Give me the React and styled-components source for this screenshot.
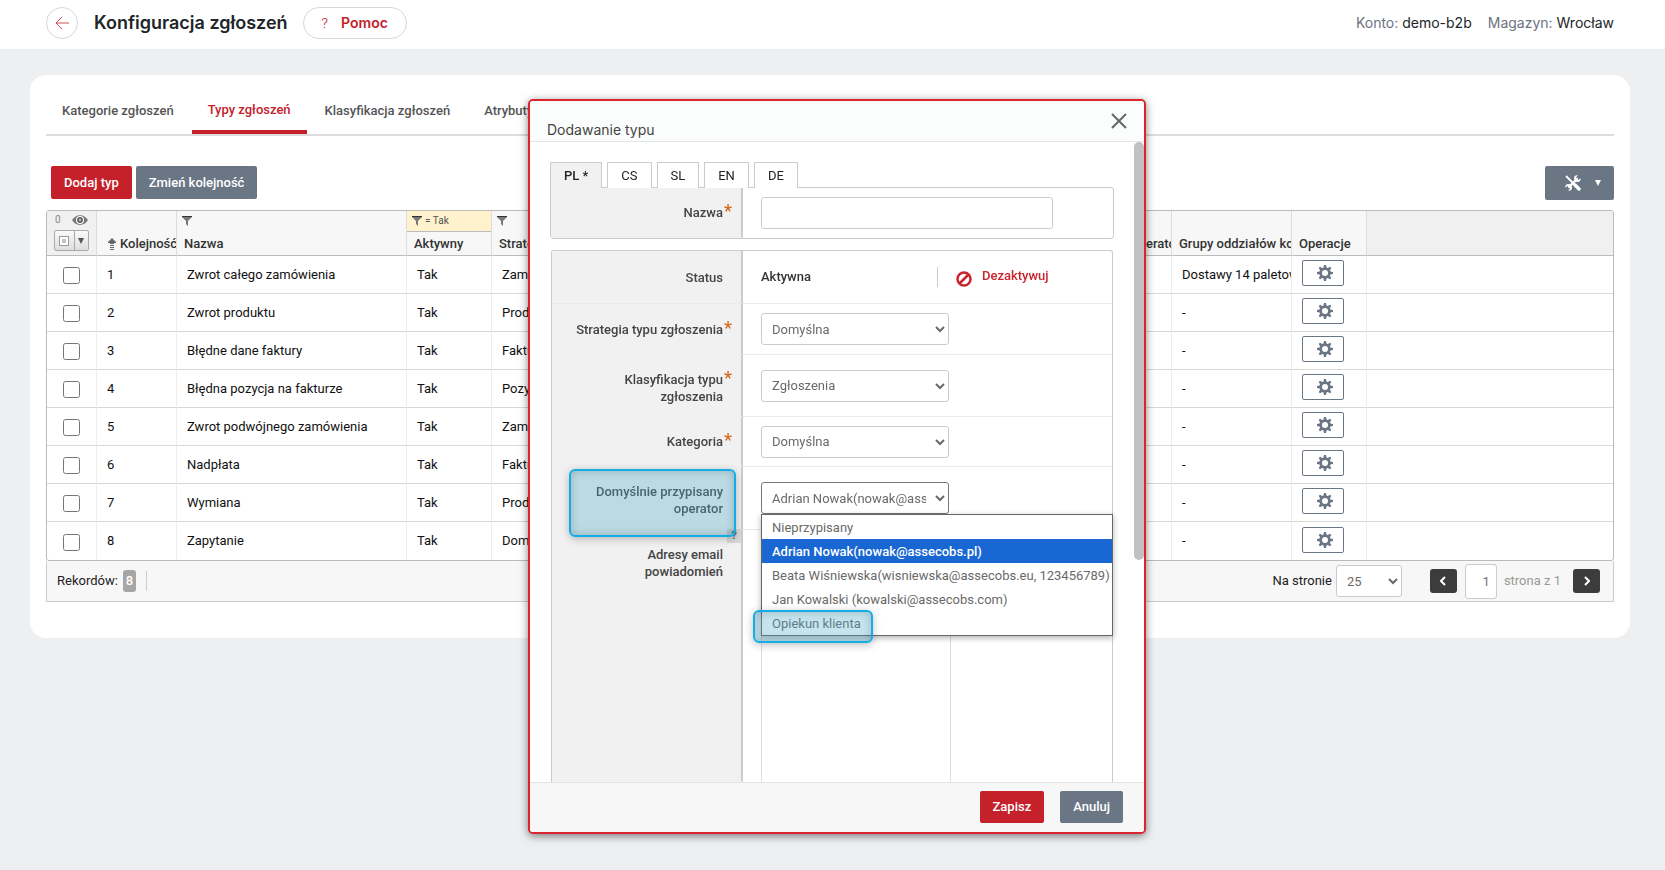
import React, { useState } from 'react';
import styled, { createGlobalStyle, css } from 'styled-components';

const GlobalStyle = createGlobalStyle`
  * {
    box-sizing: border-box;
  }

  body {
    margin: 0;
    background: #eeeff1;
    color: #212529;
    font-family: Roboto, 'Liberation Sans', sans-serif;
    font-size: 13px;
    line-height: 16px;
  }

  button,
  input,
  select,
  textarea {
    font: inherit;
  }

  svg {
    flex: none;
  }
`;

const ticketTypes = [
  { id: 1, name: 'Zwrot całego zamówienia', strategy: 'Zamówienie', groups: 'Dostawy 14 paletowe' },
  { id: 2, name: 'Zwrot produktu', strategy: 'Produkt', groups: '-' },
  { id: 3, name: 'Błędne dane faktury', strategy: 'Faktura', groups: '-' },
  { id: 4, name: 'Błędna pozycja na fakturze', strategy: 'Pozycja faktury', groups: '-' },
  { id: 5, name: 'Zwrot podwójnego zamówienia', strategy: 'Zamówienie', groups: '-' },
  { id: 6, name: 'Nadpłata', strategy: 'Faktura', groups: '-' },
  { id: 7, name: 'Wymiana', strategy: 'Produkt', groups: '-' },
  { id: 8, name: 'Zapytanie', strategy: 'Domyślna', groups: '-' },
];

const operators = [
  'Nieprzypisany',
  'Adrian Nowak(nowak@assecobs.pl)',
  'Beata Wiśniewska(wisniewska@assecobs.eu, 123456789)',
  'Jan Kowalski (kowalski@assecobs.com)',
  'Opiekun klienta',
];

const pageTabs = ['Kategorie zgłoszeń', 'Typy zgłoszeń', 'Klasyfikacja zgłoszeń', 'Atrybuty zgłoszeń'];
const languages = ['PL *', 'CS', 'SL', 'EN', 'DE'];

/* ---------- icons ---------- */

const ArrowLeft = () => (
  <svg width="14" height="14" viewBox="0 0 14 14" fill="none" stroke="#c4212b" strokeWidth=".8" aria-hidden="true">
    <path d="M14 7H1M7 1 1 7l6 6" />
  </svg>
);

const Funnel = () => (
  <svg width="10" height="10" viewBox="0 0 10 10" aria-hidden="true">
    <path d="M0 0h10v1L6 5v5L4 8V5L0 1z" fill="#777" />
    <path d="M0 0h10v1H0z" fill="#333" />
  </svg>
);

const Eye = () => (
  <svg width="16" height="10" viewBox="0 0 16 10" aria-hidden="true">
    <path d="M0 5C4-1.500 12-1.500 16 5 12 11.500 4 11.500 0 5z" fill="#777" />
    <circle cx="8" cy="5" r="4" fill="#fff" />
    <circle cx="8" cy="5" r="3" fill="#666" />
    <circle cx="8" cy="5" r="1" fill="#ddd" />
  </svg>
);

const SortUp = () => (
  <svg width="8" height="12" viewBox="0 0 8 12" fill="#666" aria-hidden="true">
    <path d="M4 0 8 4v1H6v1H2V5H0V4zM2 7h4v1H2zM2 9h4v1H2zM2 11h4v1H2z" />
  </svg>
);

const Gear = () => (
  <svg width="16" height="16" viewBox="0 0 16 16" aria-hidden="true">
    <g fill="#6b7685">
      {[0, 45, 90, 135].map(angle => (
        <path key={angle} d="M7 0h2l.6 3v10L9 16H7l-.6-3V3z" transform={`rotate(${angle} 8 8)`} />
      ))}
      <circle cx="8" cy="8" r="5.700" />
    </g>
    <circle cx="8" cy="8" r="3" fill="#fff" />
  </svg>
);

const Tools = () => (
  <svg width="16" height="16" viewBox="0 0 16 16" aria-hidden="true">
    <g fill="none" stroke="#fff" strokeLinecap="round">
      <path d="M1.500 1.500 9 9" strokeWidth="1.800" />
      <path d="m10 10 4 4" strokeWidth="3.400" />
      <path d="M4 12 12 4" strokeWidth="2.400" />
    </g>
    <path d="M15.700 3.200 13.500 5 11.300 4.700 11 2.500 12.800.4C10 0 8.500 2 9.100 4.300l2.600 2.600C14 7.500 16 6 15.700 3.200z" fill="#fff" />
    <path d="M.3 12.800 2.500 11l2.200.3.300 2.200L3.200 15.600C6 16 7.500 14 6.900 11.700L4.300 9.100C2 8.500 0 10 .3 12.800z" fill="#fff" />
  </svg>
);

const Ban = () => (
  <svg width="16" height="16" viewBox="0 0 16 16" fill="none" stroke="#c9252f" strokeWidth="2.500" aria-hidden="true">
    <circle cx="8" cy="8" r="6.500" />
    <path d="M3.500 12.500l9-9" />
  </svg>
);

const Cross = () => (
  <svg width="16" height="16" viewBox="0 0 16 16" fill="none" stroke="#666" strokeWidth="2" aria-hidden="true">
    <path d="M1 1l14 14M15 1 1 15" />
  </svg>
);

const Chevron = ({ right }) => (
  <svg width="6" height="10" viewBox="0 0 6 10" fill="none" stroke="#fff" strokeWidth="2" aria-hidden="true">
    <path d={right ? 'M1 1l4 4-4 4' : 'M5 1 1 5l4 4'} />
  </svg>
);

const CaretDown = ({ color = '#fff' }) => (
  <svg width="6" height="6" viewBox="0 0 6 6" fill={color} aria-hidden="true">
    <path d="M0 0h6L3 6z" />
  </svg>
);

/* ---------- page header ---------- */

const Header = styled.header`
  display: flex;
  align-items: center;
  height: 49px;
  padding: 0 51px 3px 46px;
  background: #fff;
  font-family: Inter, Roboto, sans-serif;
`;

const BackButton = styled.button`
  display: flex;
  align-items: center;
  justify-content: center;
  width: 32px;
  height: 32px;
  padding: 0;
  border: 1px solid #d5d7dd;
  border-radius: 50%;
  background: #fff;
`;

const PageTitle = styled.h1`
  margin: 0 15px 0 16px;
  font-size: 18px;
  font-weight: 600;
  line-height: 24px;
`;

const HelpButton = styled.button`
  display: flex;
  align-items: center;
  gap: 13px;
  height: 32px;
  padding: 0 18px;
  border: 1px solid #d5d7dd;
  border-radius: 16px;
  background: #fff;
  color: #c4212b;
  font-size: 14px;
  font-weight: 600;

  span {
    font-size: 13px;
    font-weight: 300;
  }
`;

const Account = styled.div`
  display: flex;
  gap: 16px;
  margin-left: auto;
  color: #6b7280;
  font-size: 14px;

  b {
    color: #212529;
    font-weight: 400;
  }
`;

/* ---------- card ---------- */

const Card = styled.main`
  margin: 26px 35px 26px 30px;
  padding: 16px 16px 36px;
  border-radius: 16px;
  background: #fff;
`;

const Tabs = styled.nav`
  display: flex;
  gap: 2px;
  border-bottom: 2px solid #ddd;
`;

const Tab = styled.a`
  height: 43px;
  padding: 12px 16px 0;
  color: #555;
  font-weight: 500;
  text-decoration: none;

  ${({ $active }) =>
    $active &&
    css`
      padding-top: 11px;
      border-bottom: 4px solid #c4212b;
      color: #c4212b;
    `}
`;

const Toolbar = styled.div`
  display: flex;
  gap: 4px;
  align-items: flex-start;
  padding: 30px 0 10px 5px;
`;

const Button = styled.button`
  display: flex;
  align-items: center;
  height: ${({ $small }) => ($small ? 32 : 33)}px;
  padding: 0 13px;
  border: 0;
  border-radius: 2px;
  background: ${({ $primary }) => ($primary ? '#c4212b' : '#6b7685')};
  color: #fff;
  font-weight: 500;
`;

const ToolsButton = styled(Button)`
  gap: 14px;
  height: 34px;
  margin-left: auto;
  padding: 0 13px 0 20px;
`;

const Grid = styled.div`
  overflow: hidden;
  border: 1px solid #bbb;
  border-radius: 3px;
`;

const Table = styled.table`
  width: 100%;
  border-collapse: separate;
  border-spacing: 0;
  table-layout: fixed;
`;

const HeadCell = styled.th`
  height: 45px;
  padding: 0;
  overflow: hidden;
  border-right: 1px solid #ddd;
  border-bottom: 1px solid #bbb;
  background: ${({ $blank }) => ($blank ? '#f0f0f0' : '#f7f7f7')};
  color: #333;
  font-weight: 500;
  text-align: left;
  vertical-align: top;
  white-space: nowrap;

  &:last-child {
    border-right: 0;
  }
`;

const FilterBox = styled.div`
  display: flex;
  align-items: center;
  gap: 3px;
  height: 21px;
  padding: 0 5px;
  border-bottom: 1px solid ${({ $on }) => ($on ? '#bbb' : 'transparent')};
  background: ${({ $on }) => ($on ? '#fff2cc' : 'transparent')};
  color: #555;
  font-size: 10px;
  font-weight: 400;
`;

const HeadLabel = styled.div`
  display: flex;
  align-items: center;
  gap: 4px;
  padding: 4px 0 0;
  padding-left: ${({ $sorted }) => ($sorted ? 11 : 7)}px;
`;

const SelectionHead = styled.div`
  display: flex;
  align-items: center;
  gap: 11px;
  height: 19px;
  padding: 0 8px 1px;
  color: #888;
  font-size: 10px;
  font-weight: 400;
`;

const SplitButton = styled.button`
  display: flex;
  align-items: center;
  width: 35px;
  height: 21px;
  margin-left: 7px;
  padding: 0;
  border: 1px solid #aaa;
  border-radius: 2px;
  background: linear-gradient(#fafafa, #ddd);

  i {
    width: 10px;
    height: 10px;
    margin: 0 5px 0 4px;
    border: 1px solid #999;
    background: #b8c2cc;
    box-shadow: inset 0 0 0 2px #fff;
  }

  svg {
    box-sizing: content-box;
    padding: 7px 3px;
    border-left: 1px solid #aaa;
  }
`;

const Cell = styled.td`
  height: 38px;
  padding: 0 10px;
  overflow: hidden;
  border-right: 1px solid #eee;
  border-bottom: ${({ $last }) => ($last ? 0 : 1)}px solid #d8d8d8;
  color: #111;
  white-space: nowrap;

  &:last-child {
    border-right: 0;
  }
`;

const Checkbox = styled.input`
  display: block;
  width: 17px;
  height: 17px;
  margin: 2px auto 0;
`;

const GearButton = styled.button`
  display: flex;
  align-items: center;
  justify-content: center;
  width: 42px;
  height: 26px;
  margin-bottom: 3px;
  padding: 0 0 0 4px;
  border: 1px solid #6b7685;
  border-radius: 2px;
  background: #fff;
`;

const Pager = styled.div`
  display: flex;
  align-items: center;
  height: 41px;
  padding: 0 13px 0 10px;
  border: 1px solid #ccc;
  border-top: 0;
  background: #f7f7f7;
  color: #222;
`;

const Count = styled.b`
  margin: 0 10px 0 5px;
  padding: 3px;
  border-radius: 3px;
  background: #a6a6a6;
  color: #fff;
  font-weight: 500;
`;

const Divider = styled.span`
  width: 1px;
  height: 20px;
  background: #ccc;
`;

const PageSize = styled.label`
  display: flex;
  align-items: center;
  gap: 4px;
  margin: 0 28px 0 auto;
`;

const Select = styled.select`
  width: ${({ $width }) => $width || 188}px;
  height: 32px;
  padding: 0 6px;
  border: 1px solid ${({ $open }) => ($open ? '#777' : '#ccc')};
  border-radius: 3px;
  background: #fff;
  color: #6a6a6a;
`;

const PageButton = styled.button`
  display: flex;
  align-items: center;
  justify-content: center;
  width: 27px;
  height: 24px;
  padding: 0;
  border: 0;
  border-radius: 3px;
  background: #3c3c3c;
`;

const PageInput = styled.input`
  width: 32px;
  height: 35px;
  margin: 0 7px 0 8px;
  padding: 0 6px;
  border: 1px solid #ccc;
  border-radius: 3px;
  color: #777;
  text-align: right;
`;

const PageTotal = styled.span`
  margin-right: 12px;
  color: #999;
`;

/* ---------- dialog ---------- */

const Overlay = styled.div`
  position: fixed;
  inset: 0;
  display: flex;
  align-items: center;
  justify-content: center;
  padding: 99px 25px 36px 34px;
`;

const Dialog = styled.section`
  display: flex;
  flex-direction: column;
  width: 618px;
  height: 100%;
  border: 2px solid #dc2430;
  border-radius: 5px;
  background: #fff;
  box-shadow: 0 2px 8px rgba(0, 0, 0, 0.5);
`;

const DialogHeader = styled.div`
  display: flex;
  justify-content: space-between;
  height: 41px;
  padding: 12px 17px 0;
  border-bottom: 1px solid #e4e6e6;
  border-radius: 3px 3px 0 0;
  background: #fbfdfc;
`;

const DialogTitle = styled.h2`
  margin: 8px 0 0;
  color: #444;
  font-family: Inter, Roboto, sans-serif;
  font-size: 14px;
  font-weight: 400;
  line-height: 18px;
`;

const CloseButton = styled.button`
  display: flex;
  align-items: flex-start;
  padding: 0;
  border: 0;
  background: none;
`;

const DialogBody = styled.div`
  display: flex;
  flex: 1;
  min-height: 0;
`;

const Form = styled.form`
  display: flex;
  flex: 1;
  flex-direction: column;
  min-height: 0;
  padding: 20px 20px 0;
`;

const ScrollThumb = styled.div`
  width: 10px;
  height: 418px;
  border-radius: 5px;
  background: #c1c1c1;
`;

const LangTabs = styled.div`
  display: flex;
  gap: 5px;
  z-index: 1;
`;

const LangTab = styled.button`
  height: 26px;
  margin-bottom: -1px;
  padding: 0 13px;
  border: 1px solid #ccc;
  border-bottom: 0;
  background: ${({ $active }) => ($active ? '#f1f1f1' : '#fff')};
  color: #222;
  font-weight: ${({ $active }) => ($active ? 500 : 400)};
`;

const Fieldset = styled.div`
  display: flex;
  flex-direction: column;
  flex: ${({ $fill }) => ($fill ? 1 : 'none')};
  min-height: 0;
  margin: ${({ $fill }) => ($fill ? '11px 1px 0' : 0)};
  border: 1px solid #ccc;
  border-bottom-width: ${({ $fill }) => ($fill ? 0 : 1)}px;
  border-radius: ${({ $fill }) => ($fill ? '3px 3px 0 0' : '0 3px 3px 3px')};
`;

const Row = styled.div`
  display: flex;
  flex: ${({ $fill }) => ($fill ? 1 : 'none')};
  height: ${({ $height }) => ($height ? `${$height}px` : 'auto')};
  min-height: 0;
`;

const LabelCell = styled.div`
  position: relative;
  display: flex;
  align-items: ${({ $top }) => ($top ? 'flex-start' : 'center')};
  justify-content: flex-end;
  width: ${({ $wide }) => ($wide ? 192 : 191)}px;
  padding: ${({ $top, $multi }) => ($top ? 16 : $multi ? 4 : 0)}px 18px 0 8px;
  border-right: 2px solid #ccc;
  border-bottom: 1px solid ${({ $line }) => ($line ? '#eaeaea' : '#f1f1f1')};
  background: #f1f1f1;
`;

const Label = styled.label`
  position: relative;
  max-width: ${({ $oneLine }) => ($oneLine ? 'none' : '140px')};
  color: #444;
  font-weight: 500;
  line-height: 17px;
  text-align: right;

  ${({ $required }) =>
    $required &&
    css`
      &::after {
        content: '*';
        position: absolute;
        top: -2px;
        right: -9px;
        color: #d2691e;
        font-size: 18px;
      }
    `}
`;

const FieldCell = styled.div`
  position: relative;
  display: flex;
  flex: 1;
  align-items: center;
  padding-left: 18px;
  border-bottom: ${({ $last }) => ($last ? 0 : 1)}px solid #eaeaea;
`;

const NameInput = styled.input`
  width: 292px;
  height: 32px;
  padding: 0 10px;
  border: 1px solid #ccc;
  border-radius: 3px;
`;

const StatusValue = styled.b`
  flex: 0 0 176px;
  color: #333;
  font-weight: 500;
`;

const DeactivateButton = styled.button`
  display: flex;
  align-items: flex-start;
  gap: 10px;
  margin-left: 18px;
  padding: 0;
  border: 0;
  background: none;
  color: #c9252f;
  font-weight: 500;

  svg {
    margin-top: 3px;
  }
`;

const EmailBox = styled.textarea`
  align-self: stretch;
  width: 190px;
  border: 1px solid #ddd;
  border-width: 0 1px;
  resize: none;
`;

const Options = styled.ul`
  position: absolute;
  top: 47px;
  right: -1px;
  left: 18px;
  z-index: 3;
  margin: 0;
  padding: 0;
  border: 1px solid #666;
  background: #fff;
  box-shadow: 0 2px 6px rgba(0, 0, 0, 0.3);
  list-style: none;
`;

const Option = styled.li`
  height: 24px;
  padding: 0 0 0 10px;
  background: ${({ $selected }) => ($selected ? '#1967d2' : '#fff')};
  color: ${({ $selected }) => ($selected ? '#fff' : '#6a6a6a')};
  font-weight: ${({ $selected }) => ($selected ? 500 : 400)};
  line-height: 25px;
  white-space: nowrap;
`;

const highlight = css`
  position: absolute;
  z-index: 4;
  border: 2px solid #12aee8;
  border-radius: 6px;
  background: rgba(75, 172, 198, 0.32);
  box-shadow: 0 2px 8px rgba(0, 0, 0, 0.25), inset 0 0 10px rgba(0, 0, 0, 0.2);
  pointer-events: none;
`;

const LabelHighlight = styled.span`
  ${highlight}
  inset: 2px 5px -8px 17px;
`;

const OptionHighlight = styled.span`
  ${highlight}
  bottom: -8px;
  left: -9px;
  width: 120px;
  height: 33px;
`;

const Hint = styled.span`
  position: absolute;
  right: 0;
  bottom: -14px;
  z-index: 1;
  width: 14px;
  height: 14px;
  background: #d8d8d8;
  color: #555;
  font-size: 11px;
  font-weight: 700;
  line-height: 14px;
  text-align: center;
`;

const DialogFooter = styled.div`
  display: flex;
  gap: 16px;
  justify-content: flex-end;
  height: 50px;
  padding: 8px 21px 0;
  border-top: 1px solid #e4e4e4;
  border-radius: 0 0 3px 3px;
  background: #f7f7f7;
`;

function SelectRow({ id, label, value, height, oneLine }) {
  return (
    <Row $height={height}>
      <LabelCell $multi={!oneLine}>
        <Label htmlFor={id} $required $oneLine={oneLine}>
          {label}
        </Label>
      </LabelCell>
      <FieldCell>
        <Select id={id} defaultValue={value}>
          <option>{value}</option>
        </Select>
      </FieldCell>
    </Row>
  );
}

function TypeDialog({ onClose }) {
  const [language, setLanguage] = useState('PL *');
  const [operator, setOperator] = useState(operators[1]);

  return (
    <Overlay>
      <Dialog role="dialog" aria-labelledby="dialog-title">
        <DialogHeader>
          <DialogTitle id="dialog-title">Dodawanie typu</DialogTitle>
          <CloseButton type="button" aria-label="Zamknij" onClick={onClose}>
            <Cross />
          </CloseButton>
        </DialogHeader>

        <DialogBody>
          <Form id="type-form" onSubmit={e => e.preventDefault()}>
            <LangTabs>
              {languages.map(x => (
                <LangTab key={x} type="button" $active={x === language} onClick={() => setLanguage(x)}>
                  {x}
                </LangTab>
              ))}
            </LangTabs>
            <Fieldset>
              <Row $height={50}>
                <LabelCell $wide>
                  <Label htmlFor="name" $required>
                    Nazwa
                  </Label>
                </LabelCell>
                <FieldCell $last>
                  <NameInput id="name" type="text" />
                </FieldCell>
              </Row>
            </Fieldset>

            <Fieldset $fill>
              <Row $height={53}>
                <LabelCell $line>
                  <Label as="span">Status</Label>
                </LabelCell>
                <FieldCell>
                  <StatusValue>Aktywna</StatusValue>
                  <Divider />
                  <DeactivateButton type="button">
                    <Ban />
                    Dezaktywuj
                  </DeactivateButton>
                </FieldCell>
              </Row>
              <SelectRow id="strategy" label="Strategia typu zgłoszenia" value="Domyślna" height={51} oneLine />
              <SelectRow id="classification" label="Klasyfikacja typu zgłoszenia" value="Zgłoszenia" height={62} />
              <SelectRow id="category" label="Kategoria" value="Domyślna" height={50} oneLine />
              <Row $height={63}>
                <LabelCell $multi>
                  <Label htmlFor="operator">Domyślnie przypisany operator</Label>
                  <LabelHighlight />
                  <Hint>?</Hint>
                </LabelCell>
                <FieldCell>
                  <Select id="operator" $open value={operator} onChange={e => setOperator(e.target.value)}>
                    {operators.map(x => (
                      <option key={x}>{x}</option>
                    ))}
                  </Select>
                  <Options role="listbox">
                    {operators.map(x => (
                      <Option
                        key={x}
                        role="option"
                        aria-selected={x === operator}
                        $selected={x === operator}
                        onClick={() => setOperator(x)}
                      >
                        {x}
                      </Option>
                    ))}
                    <OptionHighlight />
                  </Options>
                </FieldCell>
              </Row>
              <Row $fill>
                <LabelCell $top>
                  <Label htmlFor="emails">Adresy email powiadomień</Label>
                </LabelCell>
                <FieldCell $last>
                  <EmailBox id="emails" />
                </FieldCell>
              </Row>
            </Fieldset>
          </Form>
          <ScrollThumb />
        </DialogBody>

        <DialogFooter>
          <Button type="submit" form="type-form" $primary $small>
            Zapisz
          </Button>
          <Button type="button" $small onClick={onClose}>
            Anuluj
          </Button>
        </DialogFooter>
      </Dialog>
    </Overlay>
  );
}

export default function App() {
  const [open, setOpen] = useState(true);

  return (
    <>
      <GlobalStyle />
      <Header>
        <BackButton type="button" aria-label="Wstecz">
          <ArrowLeft />
        </BackButton>
        <PageTitle>Konfiguracja zgłoszeń</PageTitle>
        <HelpButton type="button">
          <span>?</span>
          Pomoc
        </HelpButton>
        <Account>
          <span>
            Konto: <b>demo-b2b</b>
          </span>
          <span>
            Magazyn: <b>Wrocław</b>
          </span>
        </Account>
      </Header>

      <Card>
        <Tabs>
          {pageTabs.map(x => (
            <Tab key={x} href="#" $active={x === 'Typy zgłoszeń'}>
              {x}
            </Tab>
          ))}
        </Tabs>

        <Toolbar>
          <Button type="button" $primary onClick={() => setOpen(true)}>
            Dodaj typ
          </Button>
          <Button type="button">Zmień kolejność</Button>
          <ToolsButton type="button" aria-label="Narzędzia">
            <Tools />
            <CaretDown />
          </ToolsButton>
        </Toolbar>

        <Grid>
          <Table>
            <colgroup>
              <col width="50" />
              <col width="80" />
              <col width="230" />
              <col width="85" />
              <col width="502" />
              <col width="178" />
              <col width="120" />
              <col width="75" />
              <col />
            </colgroup>
            <thead>
              <tr>
                <HeadCell $blank>
                  <SelectionHead>
                    0 <Eye />
                  </SelectionHead>
                  <SplitButton type="button" aria-label="Zaznacz">
                    <i />
                    <CaretDown color="#555" />
                  </SplitButton>
                </HeadCell>
                <HeadCell>
                  <FilterBox />
                  <HeadLabel $sorted>
                    <SortUp />
                    Kolejność
                  </HeadLabel>
                </HeadCell>
                <HeadCell>
                  <FilterBox>
                    <Funnel />
                  </FilterBox>
                  <HeadLabel>Nazwa</HeadLabel>
                </HeadCell>
                <HeadCell>
                  <FilterBox $on>
                    <Funnel /> = Tak
                  </FilterBox>
                  <HeadLabel>Aktywny</HeadLabel>
                </HeadCell>
                <HeadCell>
                  <FilterBox>
                    <Funnel />
                  </FilterBox>
                  <HeadLabel>Strategia</HeadLabel>
                </HeadCell>
                <HeadCell>
                  <FilterBox />
                  <HeadLabel>Domyślnie przypisany operator</HeadLabel>
                </HeadCell>
                <HeadCell>
                  <FilterBox />
                  <HeadLabel>Grupy oddziałów kontrahentów</HeadLabel>
                </HeadCell>
                <HeadCell>
                  <FilterBox />
                  <HeadLabel>Operacje</HeadLabel>
                </HeadCell>
                <HeadCell $blank />
              </tr>
            </thead>
            <tbody>
              {ticketTypes.map((x, i) => {
                const last = i === ticketTypes.length - 1;
                return (
                  <tr key={x.id}>
                    <Cell $last={last}>
                      <Checkbox type="checkbox" aria-label={x.name} />
                    </Cell>
                    <Cell $last={last}>{x.id}</Cell>
                    <Cell $last={last}>{x.name}</Cell>
                    <Cell $last={last}>Tak</Cell>
                    <Cell $last={last}>{x.strategy}</Cell>
                    <Cell $last={last} />
                    <Cell $last={last}>{x.groups}</Cell>
                    <Cell $last={last}>
                      <GearButton type="button" aria-label="Operacje">
                        <Gear />
                      </GearButton>
                    </Cell>
                    <Cell $last={last} />
                  </tr>
                );
              })}
            </tbody>
          </Table>
        </Grid>
        <Pager>
          Rekordów: <Count>8</Count>
          <Divider />
          <PageSize>
            Na stronie
            <Select $width={66} defaultValue="25">
              <option>25</option>
            </Select>
          </PageSize>
          <PageButton type="button" aria-label="Poprzednia strona">
            <Chevron />
          </PageButton>
          <PageInput aria-label="Strona" defaultValue="1" />
          <PageTotal>strona z 1</PageTotal>
          <PageButton type="button" aria-label="Następna strona">
            <Chevron right />
          </PageButton>
        </Pager>
      </Card>

      {open && <TypeDialog onClose={() => setOpen(false)} />}
    </>
  );
}
